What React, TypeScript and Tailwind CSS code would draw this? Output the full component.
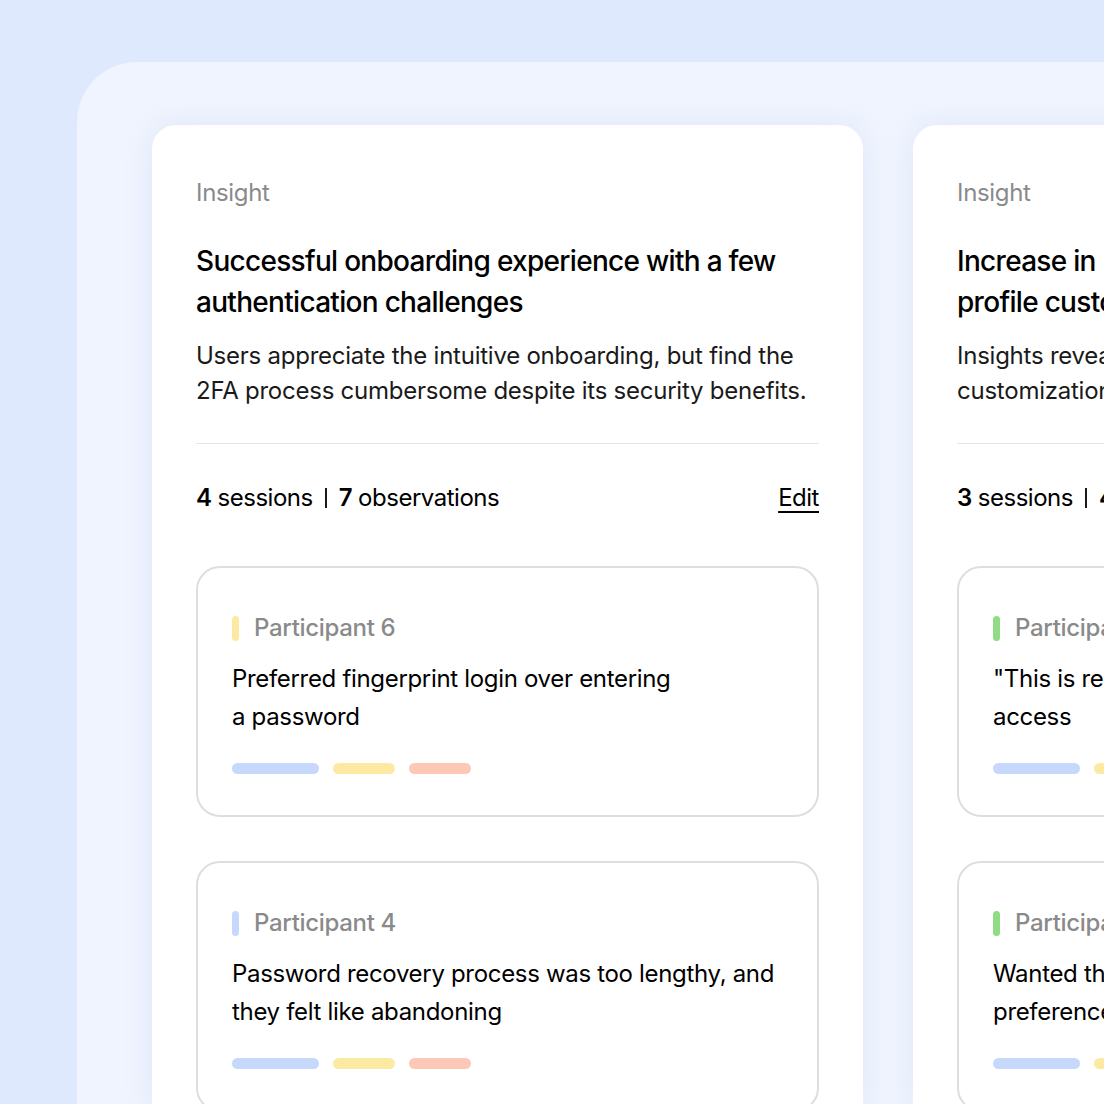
export default function App() {
  const insights = [
    {
      id: 1,
      title: "Successful onboarding experience with a few authentication challenges",
      summary: "Users appreciate the intuitive onboarding, but find the 2FA process cumbersome despite its security benefits.",
      sessions: 4,
      observations: 7,
      items: [
        { who: "Participant 6", bar: "bg-[#fdeaa2]", width: "w-[450px]", text: "Preferred fingerprint login over entering a password" },
        { who: "Participant 4", bar: "bg-[#c6d8fc]", width: "w-[550px]", text: "Password recovery process was too lengthy, and they felt like abandoning" },
      ],
    },
    {
      id: 2,
      title: "Increase in user engagement driven by more profile customization",
      summary: "Insights reveal that users engage more after adding customization to their profiles.",
      sessions: 3,
      observations: 4,
      items: [
        { who: "Participant 2", bar: "bg-[#8fdc84]", width: "w-[450px]", text: "\"This is really nice, I wish I had easier access" },
        { who: "Participant 1", bar: "bg-[#8fdc84]", width: "w-[450px]", text: "Wanted the option to set display preferences" },
      ],
    },
  ];

  return (
    <div className="h-[1104px] w-[1104px] overflow-hidden bg-[#dfe9fd] pl-[77px] pt-[62px] font-['Inter',sans-serif] tracking-[-0.02em] text-black">
      <div className="flex h-full gap-[50px] rounded-tl-[60px] bg-[#eff4fe] pl-[75px] pt-[63px]">
        {insights.map((insight) => (
          <div
            key={insight.id}
            className="w-[711px] shrink-0 rounded-t-[24px] bg-white px-[44px] pt-[50px] shadow-[0_0_24px_rgba(180,195,230,0.25)]"
          >
            <div className="text-[24px] leading-[36px] text-[#8a8a8a]">Insight</div>
            <h3 className="mt-[30px] w-[600px] text-[28px] font-medium leading-[41px] tracking-[-0.025em]">{insight.title}</h3>
            <p className="mt-[15px] w-[615px] text-[24px] leading-[35px] tracking-[-0.01em] text-[#1a1a1a]">{insight.summary}</p>

            <div className="mt-[35px] border-t border-[#e5e5e5]" />

            <div className="mt-[36px] flex items-center justify-between text-[24px] leading-[36px] tracking-[-0.02em]">
              <div className="flex items-center">
                <span className="font-semibold">{insight.sessions}</span>
                <span className="ml-[6px]">sessions</span>
                <span className="mx-[12px] h-[20px] w-[2px] bg-[#1a1a1a]" />
                <span className="font-semibold">{insight.observations}</span>
                <span className="ml-[6px]">observations</span>
              </div>
              <a className="underline decoration-[1.5px] underline-offset-[5px]">Edit</a>
            </div>

            <div className="mt-[50px] space-y-[44px]">
              {insight.items.map((item) => (
                <div key={item.who} className="h-[251px] rounded-[24px] border-2 border-[#dedede] px-[34px] pt-[42px]">
                  <div className="flex items-center gap-[15px]">
                    <span className={`h-[25px] w-[7px] rounded-full ${item.bar}`} />
                    <span className="text-[24px] font-medium leading-[36px] text-[#8a8a8a]">{item.who}</span>
                  </div>
                  <p className={`mt-[14px] text-[24px] leading-[38px] ${item.width}`}>{item.text}</p>
                  <div className="mt-[27px] flex gap-[14px]">
                    <span className="h-[11px] w-[87px] rounded-full bg-[#c6d8fc]" />
                    <span className="h-[11px] w-[62px] rounded-full bg-[#fdeaa2]" />
                    <span className="h-[11px] w-[62px] rounded-full bg-[#fdc8b6]" />
                  </div>
                </div>
              ))}
            </div>
          </div>
        ))}
      </div>
    </div>
  );
}
